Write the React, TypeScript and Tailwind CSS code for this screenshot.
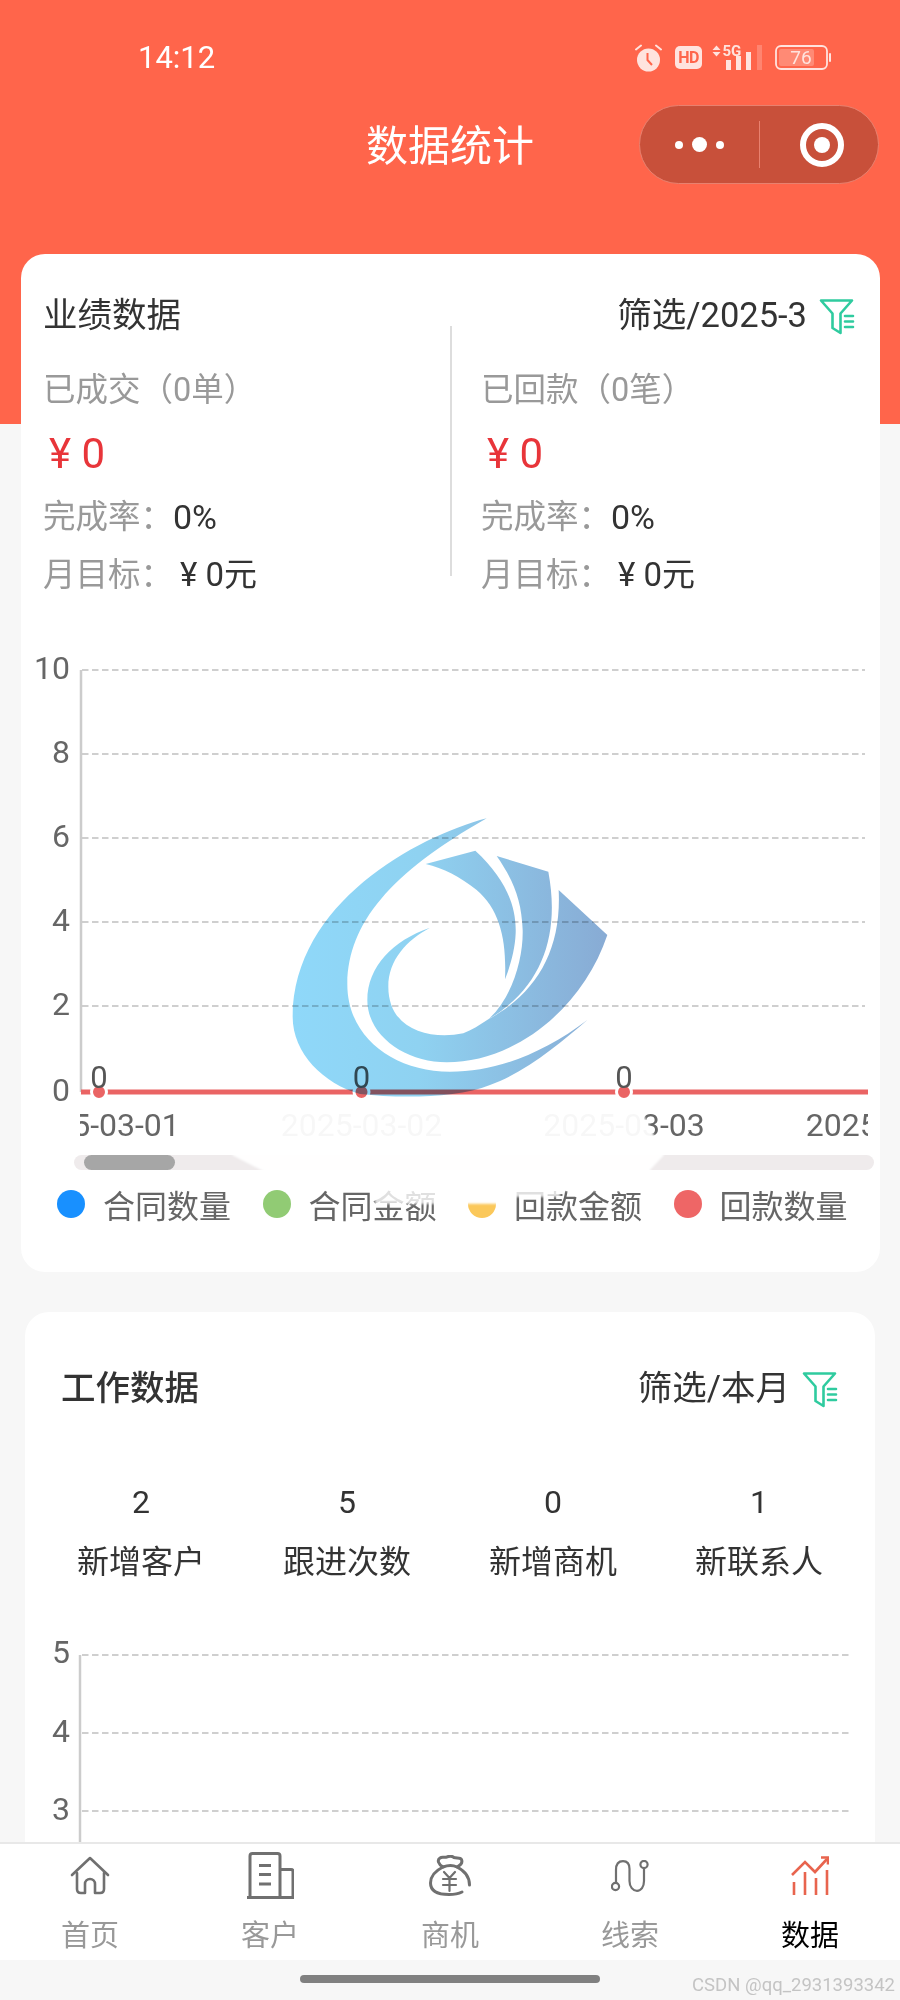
import type { ReactNode } from "react";

const GRID_1 = [670, 754, 838, 922, 1006];
const GRID_2 = [1655, 1733, 1811];

function FilterIcon() {
  return (
    <svg width="36" height="37" viewBox="0 0 36 37" fill="none" stroke="#2fcb9f" strokeWidth="2.6" strokeLinejoin="round" strokeLinecap="round">
      <path d="M2 2.5H33L21.5 15.5V35L13.5 30V15.5Z" />
      <path d="M26 18H34M26 23.500H34M26 29H34" />
    </svg>
  );
}

function HomeIcon() {
  return (
    <svg width="40" height="39" viewBox="0 0 40 39" fill="none" stroke="#707070" strokeWidth="2.6" strokeLinecap="round" strokeLinejoin="round">
      <path d="M2 19L20 2L38 19" />
      <path d="M7 17V33Q7 37 11 37H15V28A5 5 0 0 1 25 28V37H30Q34 37 34 33V17" />
    </svg>
  );
}

function BuildingIcon() {
  return (
    <svg width="47" height="47" viewBox="0 0 47 47" fill="none" stroke="#707070" strokeWidth="3">
      <path d="M3 45V4Q3 1.500 5.500 1.500H30.500Q33 1.500 33 4V45" />
      <path d="M33 17.500H44Q46 17.500 46 19.500V45" />
      <path d="M0 45.500H47" strokeWidth="3" />
      <path d="M12 13.500H24M12 22.500H24M12 32H24" />
    </svg>
  );
}

function BagIcon() {
  return (
    <svg width="42" height="41" viewBox="0 0 42 41" fill="none" stroke="#707070" strokeWidth="3" strokeLinecap="round" strokeLinejoin="round">
      <path d="M14 12C9 9 8 5 11 3C13 1.500 15 3 18 2C20 1 23 1 25 2.500C28 3.500 31 2 32.500 4.500C33.500 7 32 10 28 12C24 10 19 10 14 12Z" />
      <path d="M14 12C6 16 1.500 22 1.500 28C1.500 36 8 39.500 20 39.500C25 39.500 30 38.500 33 37" />
      <path d="M28 12C36 16 40.500 22 40.500 30" />
      <path d="M15 17L20.500 23L26 17M14 24H27M14 30H27M20.500 23V36" strokeWidth="2.200" />
    </svg>
  );
}

function RouteIcon() {
  return (
    <svg width="38" height="32" viewBox="0 0 38 32" fill="none" stroke="#707070" strokeWidth="2.200" strokeLinecap="round">
      <circle cx="4.500" cy="26.500" r="3.600" />
      <circle cx="33" cy="4.500" r="3.600" />
      <path d="M5 23V10C5 4 8 1.200 12 1.200C16 1.200 18.500 4 18.500 9V21C18.500 27 22 30.800 26 30.800C30 30.800 33 27 33 21V8.500" />
    </svg>
  );
}

function TrendIcon() {
  return (
    <svg width="38" height="39" viewBox="0 0 38 39" fill="none" stroke="#e8644e" strokeWidth="2.600">
      <path d="M1 19L14 6L24 16L36 3" />
      <path d="M30 1.500H37V8.500" />
      <path d="M3 26V39M14 16V39M25 22V39M36 14V39" />
    </svg>
  );
}

function StatusIcons() {
  return (
    <div className="flex items-center gap-[13px]">
      <svg width="27" height="29" viewBox="0 0 27 29">
        <circle cx="13.500" cy="17" r="11.500" fill="#ffe3de" />
        <path d="M12.500 10V17L17 22" fill="none" stroke="#ff654b" strokeWidth="2" />
        <path d="M1 6.500L6 2.500M21 2.500L26 6.500" stroke="#ffe3de" strokeWidth="2" strokeLinecap="round" />
      </svg>
      <div className="flex h-[23px] w-[27px] items-center justify-center rounded-[5px] bg-[#ffe3de] text-[16px] font-bold leading-none tracking-[-0.5px] text-[#ff654b]">
        HD
      </div>
      <svg width="50" height="25" viewBox="0 0 50 25" className="-ml-[3px]">
        <path d="M0.500 5L4.500 0.500L8.500 5ZM0.500 7L4.500 11.500L8.500 7Z" fill="#ffe3de" />
        <text x="10.500" y="11" fontSize="15" fontWeight="700" fill="#ffe3de">5G</text>
        <rect x="14" y="15" width="5" height="10" fill="#ffe3de" />
        <rect x="24" y="11" width="5" height="14" fill="#ffe3de" />
        <rect x="34" y="7" width="5" height="18" fill="#ffe3de" />
        <rect x="45" y="0" width="5" height="25" fill="#ffe3de" opacity="0.25" />
      </svg>
      <svg width="56" height="25" viewBox="0 0 56 25">
        <rect x="1" y="1" width="51" height="23" rx="5" fill="none" stroke="#ffe3de" strokeWidth="1.800" />
        <rect x="4" y="4" width="35" height="17" rx="2" fill="#ff8a75" />
        <rect x="54" y="8" width="2" height="9" rx="1" fill="#ffe3de" />
        <text x="26" y="19" fontSize="19" textAnchor="middle" fill="#ffe3de">76</text>
      </svg>
    </div>
  );
}

function CardHead({ title, filter, medium }: { title: string; filter: string; medium?: boolean }) {
  return (
    <div className="flex h-[46px] items-center justify-between">
      <span className={`text-[34.500px] text-[#333] ${medium ? "font-medium" : ""}`}>{title}</span>
      <div className="flex items-center gap-[12px]">
        <span className="text-[34.500px] text-[#333]">{filter}</span>
        <FilterIcon />
      </div>
    </div>
  );
}

function DealColumn({ title }: { title: string }) {
  return (
    <div>
      <div className="flex h-[46px] items-center text-[32.500px] text-[#999]">{title}</div>
      <div className="mt-[16px] flex h-[50px] items-center pl-[6px] text-[42px] leading-none text-[#e8353a]">¥ 0</div>
      <div className="mt-[15px] flex h-[46px] items-center text-[32.500px] text-[#999]">
        完成率：<span className="text-[34px] text-[#333]">0%</span>
      </div>
      <div className="mt-[12px] flex h-[46px] items-center text-[32.500px] text-[#999]">
        月目标：<span className="ml-[7px] text-[33px] text-[#333]">¥ 0元</span>
      </div>
    </div>
  );
}

function GridLine({ y, x2 }: { y: number; x2: number }) {
  return <line x1="82" y1={y} x2={x2} y2={y} stroke="#cfcfcf" strokeWidth="2" strokeDasharray="6.500 3.500" />;
}

function YLabel({ y, children }: { y: number; children: ReactNode }) {
  return (
    <text x="70" y={y + 11} fontSize="32" textAnchor="end" fill="#666">
      {children}
    </text>
  );
}

const Y_LABELS_1: [number, string][] = [
  [668, "10"],
  [752, "8"],
  [836, "6"],
  [920, "4"],
  [1004, "2"],
  [1090, "0"],
];

function SalesChart() {
  const points = [99, 361.5, 624];
  return (
    <svg width="859" height="540" viewBox="21 640 859 540" className="block">
      <defs>
        <clipPath id="xlabels">
          <rect x="80" y="1100" width="788" height="50" />
        </clipPath>
      </defs>
      {GRID_1.map((y) => (
        <GridLine key={y} y={y} x2={865} />
      ))}
      <path d="M81 670V1092" stroke="#cccccc" strokeWidth="2.500" fill="none" />
      {Y_LABELS_1.map(([y, t]) => (
        <YLabel key={t} y={y}>
          {t}
        </YLabel>
      ))}
      <line x1="81" y1="1092" x2="868" y2="1092" stroke="#ea6464" strokeWidth="5" />
      {points.map((x) => (
        <g key={x}>
          <circle cx={x} cy="1092" r="7.500" fill="#ea6464" stroke="#fff" strokeWidth="3" />
          <text x={x} y="1088" fontSize="31" textAnchor="middle" fill="#555">0</text>
        </g>
      ))}
      <g clipPath="url(#xlabels)" fontSize="32" fill="#666" textAnchor="middle">
        <text x="99" y="1136">2025-03-01</text>
        <text x="361.500" y="1136">2025-03-02</text>
        <text x="624" y="1136">2025-03-03</text>
        <text x="886.500" y="1136">2025-03-04</text>
      </g>
      <rect x="74" y="1155" width="800" height="15" rx="7.500" fill="#efebec" />
      <rect x="84" y="1155" width="91" height="15" rx="7.500" fill="#a6a6a6" />
    </svg>
  );
}

function WorkChart() {
  return (
    <svg width="850" height="202" viewBox="25 1640 850 202" className="block">
      {GRID_2.map((y) => (
        <GridLine key={y} y={y} x2={852} />
      ))}
      <line x1="80" y1="1655" x2="80" y2="1842" stroke="#cccccc" strokeWidth="2.500" />
      <YLabel y={1652}>5</YLabel>
      <YLabel y={1731}>4</YLabel>
      <YLabel y={1809}>3</YLabel>
    </svg>
  );
}

const LEGEND = [
  { color: "bg-[#1890ff]", label: "合同数量" },
  { color: "bg-[#91cb74]", label: "合同金额" },
  { color: "bg-[#fbc85a]", label: "回款金额" },
  { color: "bg-[#ee6666]", label: "回款数量" },
];

const STATS = [
  { value: "2", label: "新增客户" },
  { value: "5", label: "跟进次数" },
  { value: "0", label: "新增商机" },
  { value: "1", label: "新联系人" },
];

const TABS = [
  { label: "首页", icon: <HomeIcon /> },
  { label: "客户", icon: <BuildingIcon /> },
  { label: "商机", icon: <BagIcon /> },
  { label: "线索", icon: <RouteIcon /> },
  { label: "数据", icon: <TrendIcon />, active: true },
];

export default function App() {
  return (
    <div className="relative h-[2000px] w-[900px] overflow-hidden bg-[#f7f7f7] font-['Roboto','Noto_Sans_CJK_SC',sans-serif]">
      {/* Header */}
      <div className="h-[424px] bg-[#ff654b]">
        <div className="flex h-[105px] items-center justify-between pl-[138px] pr-[69px] pt-[10px]">
          <span className="text-[31px] leading-none text-white">14:12</span>
          <StatusIcons />
        </div>
        <div className="grid h-[79px] grid-cols-[1fr_auto_1fr] items-center">
          <div />
          <h1 className="pt-[3px] text-[42px] font-normal text-white">数据统计</h1>
          <div className="flex justify-end pr-[21px]">
            <div className="flex h-[79px] w-[240px] items-center rounded-full border border-[#e8816f] bg-[#c8503a]">
              <div className="flex w-[119px] items-center justify-center gap-[9px]">
                <span className="h-2 w-2 rounded-full bg-white" />
                <span className="h-[15px] w-[15px] rounded-full bg-white" />
                <span className="h-2 w-2 rounded-full bg-white" />
              </div>
              <div className="h-[47px] w-px bg-[#e8816f]" />
              <div className="flex flex-1 items-center justify-center pl-[6px]">
                <div className="flex h-[44px] w-[44px] items-center justify-center rounded-full border-[6px] border-white">
                  <span className="h-[16px] w-[16px] rounded-full bg-white" />
                </div>
              </div>
            </div>
          </div>
        </div>
      </div>

      {/* 业绩数据 */}
      <div className="relative -mt-[170px] ml-[21px] h-[1018px] w-[859px] rounded-[24px] bg-white">
        <div className="pl-[22px] pr-[25px] pt-[39px]">
          <CardHead title="业绩数据" filter="筛选/2025-3" />
          <div className="mt-[28px] grid grid-cols-[438px_1fr]">
            <DealColumn title="已成交（0单）" />
            <DealColumn title="已回款（0笔）" />
          </div>
        </div>
        <div className="absolute left-[429px] top-[72px] h-[250px] w-[2px] bg-[#dddddd]" />
        <div className="mt-[42px]">
          <SalesChart />
        </div>
        <div className="mt-[4px] flex pl-[36px]">
          {LEGEND.map((l) => (
            <div key={l.label} className="flex w-[205.500px] items-center gap-[18px]">
              <span className={`-mt-[6px] h-[28px] w-[28px] rounded-full ${l.color}`} />
              <span className="text-[32px] leading-[46px] text-[#666]">{l.label}</span>
            </div>
          ))}
        </div>
      </div>

      {/* 工作数据 */}
      <div className="mx-[25px] mt-[40px] h-[800px] rounded-[24px] bg-white pt-[54px]">
        <div className="pl-[36px] pr-[37px]">
          <CardHead title="工作数据" filter="筛选/本月" medium />
        </div>
        <div className="mt-[67px] grid grid-cols-4 px-[13px]">
          {STATS.map((s) => (
            <div key={s.label} className="flex flex-col items-center text-[32px] leading-[46px] text-[#333]">
              <span>{s.value}</span>
              <span className="mt-[14px]">{s.label}</span>
            </div>
          ))}
        </div>
        <div className="mt-[55px]">
          <WorkChart />
        </div>
      </div>

      {/* Watermark over the charts */}
      <svg width="400" height="330" viewBox="0 0 1200 990" className="absolute left-[250px] top-[790px] mix-blend-multiply">
        <defs>
          <linearGradient id="logo" x1="130" y1="0" x2="1072" y2="0" gradientUnits="userSpaceOnUse">
            <stop offset="0" stopColor="#8fd8f9" />
            <stop offset="0.4" stopColor="#8fd2f1" />
            <stop offset="1" stopColor="#88abd4" />
          </linearGradient>
        </defs>
        <g fill="url(#logo)">
          <path d="M710 85C500 140 130 340 128 680C128 790 220 880 330 912C450 925 620 925 720 885C830 845 930 760 1012 690C880 790 740 845 600 845C430 845 290 740 292 580C295 400 420 250 710 85Z" />
          <path d="M540 413C430 450 352 530 352 630C352 740 470 817 590 817C800 817 1000 650 1072 435L926 300C935 480 860 610 715 688C690 705 665 720 640 730C540 750 415 720 415 590C415 510 470 450 540 413Z" />
          <path d="M740 198L895 245C930 430 880 590 715 688C790 620 820 500 818 420C815 330 790 270 740 198Z" />
          <path d="M527 222L676 182C760 260 800 340 797 430C795 480 780 530 765 568C770 450 750 360 680 300C630 260 580 235 527 222Z" />
        </g>
      </svg>

      {/* Erased patch left under the watermark */}
      <svg width="900" height="2000" viewBox="0 0 900 2000" className="pointer-events-none absolute left-0 top-0 blur-[1px]">
        <path d="M260 1108H640L664 1155L650 1170V1172H265L232 1155Z" fill="#ffffff" fillOpacity="0.95" />
        <path d="M375 1172H650V1191H560V1197H515V1204H375Z" fill="#ffffff" fillOpacity="0.8" />
        <path d="M464 1172H499V1203H464Z" fill="#ffffff" />
      </svg>

      {/* Tab bar */}
      <div className="absolute bottom-0 left-0 w-full">
        <div className="grid h-[118px] grid-cols-5 border-t-2 border-[#e8e8e8] bg-white">
          {TABS.map((t) => (
            <div key={t.label} className="flex flex-col items-center">
              <div className="flex h-[63px] items-center justify-center">{t.icon}</div>
              <span className={`mt-[9px] text-[29px] leading-[40px] ${t.active ? "text-black" : "text-[#999]"}`}>{t.label}</span>
            </div>
          ))}
        </div>
        <div className="relative flex h-[40px] justify-center bg-[#f7f7f7] pt-[15px]">
          <div className="h-2 w-[300px] rounded-full bg-[#808080]" />
          <span className="absolute bottom-[5px] right-[5px] text-[18.500px] leading-[20px] text-[#c4c4c4]">CSDN @qq_2931393342</span>
        </div>
      </div>
    </div>
  );
}
